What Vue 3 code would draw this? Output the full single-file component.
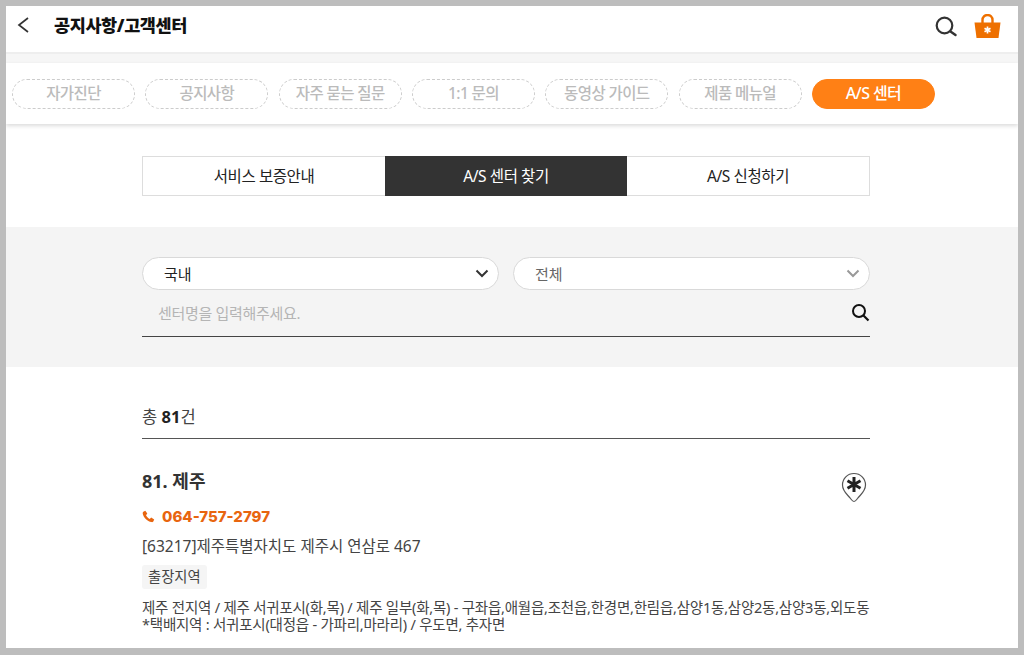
<template>
  <div class="frame">
    <div class="page">
      <header class="top">
        <div class="top-left">
          <svg class="back" width="14" height="18" viewBox="0 0 14 18"><path d="M12 2 3 9l9 7" fill="none" stroke="#333" stroke-width="1.7" /></svg>
          <h1>공지사항/고객센터</h1>
        </div>
        <div class="top-right">
          <svg width="22" height="22" viewBox="0 0 22 22"><circle cx="9.500" cy="9.500" r="7.800" fill="none" stroke="#333" stroke-width="2.200" /><path d="M15.500 15.500 20.500 19" stroke="#333" stroke-width="2.400" stroke-linecap="round" /></svg>
          <svg width="27" height="25" viewBox="0 0 27 25">
            <path d="M8.500 10V6a5 5 0 0 1 10 0v4" fill="none" stroke="#ee7000" stroke-width="2.400" />
            <path d="M0.500 8.500h26l-2 15.500H2.500z" fill="#ee7000" />
            <path d="M13.500 12.500v7M10.500 14.300l6 3.400M16.500 14.300l-6 3.400" stroke="#fff" stroke-width="1.700" />
          </svg>
        </div>
      </header>
      <div class="strip"></div>
      <nav class="pills">
        <a v-for="p in pills" :key="p" class="pill" :class="{ on: p === 'A/S 센터' }">{{ p }}</a>
      </nav>
      <div class="body">
        <div class="tabs">
          <a v-for="t in tabs" :key="t" class="tab" :class="{ on: t === 'A/S 센터 찾기' }">{{ t }}</a>
        </div>
        <section class="search">
          <div class="inner">
            <div class="selects">
              <div class="select">
                <span>국내</span>
                <svg width="14" height="9" viewBox="0 0 14 9"><path d="M1.500 1.500 7 7l5.500-5.500" fill="none" stroke="#333" stroke-width="2" /></svg>
              </div>
              <div class="select dim">
                <span>전체</span>
                <svg width="14" height="9" viewBox="0 0 14 9"><path d="M1.500 1.500 7 7l5.500-5.500" fill="none" stroke="#999" stroke-width="2" /></svg>
              </div>
            </div>
            <div class="keyword">
              <span>센터명을 입력해주세요.</span>
              <svg width="19" height="19" viewBox="0 0 19 19"><circle cx="8" cy="8" r="6" fill="none" stroke="#111" stroke-width="2" /><path d="m12.500 12.500 5 5" stroke="#111" stroke-width="2.200" /></svg>
            </div>
          </div>
        </section>
        <section class="list">
          <p class="total">총 <b>81</b>건</p>
          <article class="item">
            <div class="item-head">
              <h2>81. 제주</h2>
              <svg class="pin" width="26" height="31" viewBox="0 0 26 31">
                <path d="M13 1.500C6.500 1.500 1.500 6.500 1.500 13c0 6.500 5 9.500 8 13.500 1.500 2 2 3 3.500 3s2-1 3.500-3c3-4 8-7 8-13.500C24.500 6.500 19.500 1.500 13 1.500z" fill="#fff" stroke="#555" stroke-width="1.200" />
                <path d="M13 5v15M6.500 8.800l13 7.400M19.500 8.800l-13 7.400" stroke="#222" stroke-width="3" />
              </svg>
            </div>
            <div class="phone">
              <svg width="13" height="13" viewBox="0 0 13 13"><path d="M3.300.8 5.300 3.600 4 5.200c.7 1.500 2 2.800 3.700 3.700l1.500-1.300 3 2-.9 1.900c-.4.500-1 .7-1.700.6C5 11.300 1.500 7.600.7 3.500.6 2.800.8 2.200 1.300 1.800z" fill="#e8650f" /></svg>
              <span>064-757-2797</span>
            </div>
            <p class="addr">[63217]제주특별자치도 제주시 연삼로 467</p>
            <span class="tag">출장지역</span>
            <p class="area">제주 전지역 / 제주 서귀포시(화,목) / 제주 일부(화,목) - 구좌읍,애월읍,조천읍,한경면,한림읍,삼양1동,삼양2동,삼양3동,외도동<br />*택배지역 : 서귀포시(대정읍 - 가파리,마라리) / 우도면, 추자면</p>
          </article>
        </section>
      </div>
    </div>
  </div>
</template>

<script setup>
const pills = ['자가진단', '공지사항', '자주 묻는 질문', '1:1 문의', '동영상 가이드', '제품 메뉴얼', 'A/S 센터']
const tabs = ['서비스 보증안내', 'A/S 센터 찾기', 'A/S 신청하기']
</script>

<style>
html, body { margin: 0; }
</style>

<style scoped>
.frame {
  box-sizing: border-box;
  width: 1024px;
  height: 655px;
  padding: 6px 6px 7px;
  background: #bdbdbd;
  font-family: "Noto Sans", "Noto Sans CJK KR", sans-serif;
  color: #333;
}
.page {
  height: 100%;
  background: #fff;
  overflow: hidden;
}
.top {
  display: flex;
  justify-content: space-between;
  align-items: center;
  padding: 0 17px 9px 10px;
  box-sizing: border-box;
  border-bottom: 2px solid #eee;
  height: 48px;
}
.top-left { display: flex; align-items: center; }
.back { margin-right: 24px; }
h1 {
  margin: 0;
  font-size: 17.500px;
  font-weight: 900;
  color: #111;
  letter-spacing: -0.4px;
}
.top-right { display: flex; align-items: center; gap: 17px; margin-top: 4px; }
.strip { height: 9px; background: #f6f6f6; }
.pills {
  display: flex;
  gap: 10.330px;
  height: 61px;
  padding: 16px 0 0 6px;
  box-sizing: border-box;
  box-shadow: 0 2px 4px rgba(0, 0, 0, 0.14);
  position: relative;
}
.pill {
  box-sizing: border-box;
  width: 123px;
  height: 30px;
  line-height: 27px;
  text-align: center;
  border: 1px dashed #ccc;
  border-radius: 15px;
  font-size: 15.500px;
  font-weight: 500;
  color: #bbb;
  letter-spacing: -0.6px;
}
.pill.on {
  background: #ff8015;
  border: 1px solid #ff8015;
  color: #fff;
  font-size: 16px;
}
.tabs {
  display: flex;
  width: 728px;
  margin: 32px 0 31px 136px;
  height: 40px;
  box-sizing: border-box;
  border: 1px solid #ddd;
}
.tab {
  flex: 1;
  text-align: center;
  line-height: 38px;
  font-size: 15.500px;
  font-weight: 400;
  color: #222;
  letter-spacing: -0.4px;
}
.tab.on {
  background: #333;
  color: #fff;
  margin: -1px 0;
  height: 40px;
  line-height: 40px;
}
.search {
  height: 140px;
  background: #f4f4f4;
  padding: 30px 0 0 136px;
  box-sizing: border-box;
}
.inner { width: 728px; }
.selects { display: flex; gap: 14px; }
.select {
  flex: 1;
  height: 33px;
  box-sizing: border-box;
  display: flex;
  justify-content: space-between;
  align-items: center;
  padding: 0 9px 0 21px;
  background: #fff;
  border: 1px solid #d9d9d9;
  border-radius: 17px;
  font-size: 15px;
  color: #222;
}
.select.dim { color: #666; }
.keyword {
  display: flex;
  justify-content: space-between;
  align-items: center;
  height: 47px;
  padding: 0 0 2px 16px;
  box-sizing: border-box;
  border-bottom: 1px solid #444;
  font-size: 15px;
  color: #b5b5b5;
  letter-spacing: -0.3px;
}
.list { width: 728px; margin-left: 136px; }
.total {
  margin: 0;
  padding-top: 39px;
  height: 72px;
  box-sizing: border-box;
  border-bottom: 1px solid #555;
  font-size: 16.500px;
  line-height: 22px;
  color: #444;
}
.total b { font-weight: 700; color: #222; }
.item { padding-top: 30px; }
.item-head {
  display: flex;
  justify-content: space-between;
  height: 30px;
  padding-right: 3px;
}
.pin { margin-top: 3px; }
h2 {
  margin: 0;
  font-size: 18px;
  line-height: 24px;
  font-weight: 700;
  color: #333;
}
.phone {
  display: flex;
  align-items: center;
  gap: 7px;
  margin-top: 5px;
  height: 24px;
  font-family: Inter, sans-serif;
  font-size: 15px;
  font-weight: 800;
  color: #e8650f;
}
.addr {
  margin: 7px 0 0;
  font-size: 15.500px;
  line-height: 22px;
  color: #444;
}
.tag {
  display: inline-block;
  margin-top: 8px;
  padding: 0 6px;
  height: 24px;
  line-height: 23px;
  border-radius: 3px;
  background: #f5f5f5;
  font-size: 14.300px;
  color: #444;
}
.area {
  margin: 10px 0 0;
  font-size: 14.500px;
  line-height: 17px;
  color: #444;
  letter-spacing: -0.225px;
  white-space: nowrap;
}
</style>
